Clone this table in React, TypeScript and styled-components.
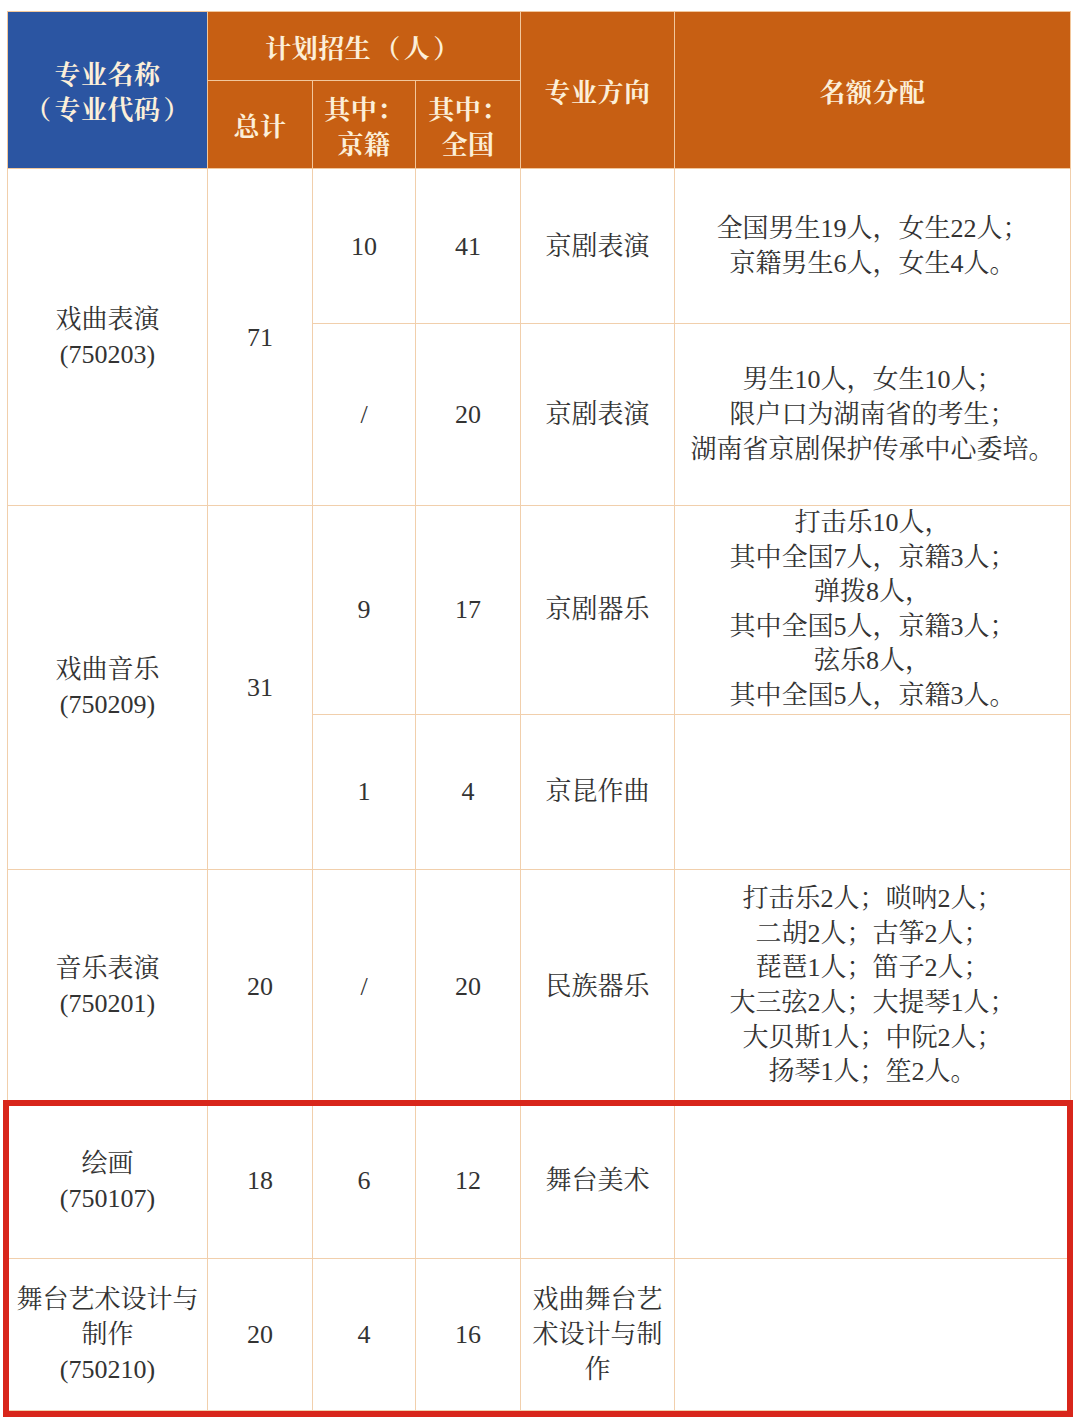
import React from "react";
import styled, { createGlobalStyle } from "styled-components";

const GlobalStyle = createGlobalStyle`
  html, body {
    margin: 0;
    padding: 0;
    background: #ffffff;
    overflow: hidden;
  }
  body {
    font-family: "Liberation Serif", "Noto Serif CJK SC", "Noto Sans CJK SC", serif;
  }
`;

const Page = styled.div`
  padding: 11px 0 13px 7px;
  min-height: 1423px;
  box-sizing: border-box;
`;

const Frame = styled.div`
  position: relative;
  width: 1063px;
`;

const Table = styled.table`
  border-collapse: collapse;
  table-layout: fixed;
  width: 1063px;
  font-family: "Liberation Serif", "Noto Serif CJK SC", "Noto Sans CJK SC", serif;
`;

const HeadRow = styled.tr<{ $h: number }>`
  height: ${(p) => p.$h}px;
`;

const HeadCell = styled.th<{ $blue?: boolean }>`
  background: ${(p) => (p.$blue ? "#2b55a2" : "#c75f13")};
  color: #fcefd9;
  font-size: 26px;
  font-weight: 700;
  line-height: 35px;
  text-align: center;
  vertical-align: middle;
  border: 1px solid #f2c79c;
  padding: 0 4px;
  letter-spacing: 0.5px;
  font-family: "Noto Serif CJK SC", "Noto Sans CJK SC", serif;
`;

const Paren = styled.span`
  display: inline-block;
  padding: 0 3px;
`;

const BodyRow = styled.tr<{ $h: number }>`
  height: ${(p) => p.$h}px;
`;

const Cell = styled.td<{ $tight?: boolean }>`
  border: 1px solid #f1cfac;
  color: #333333;
  font-size: 26px;
  line-height: ${(p) => (p.$tight ? "34.6px" : "35px")};
  text-align: center;
  vertical-align: middle;
  padding: 0 4px;
  background: #ffffff;
`;

const Highlight = styled.div`
  position: absolute;
  left: -4px;
  right: -3px;
  top: 1089px;
  height: 317px;
  border: 6px solid #d8261b;
  box-sizing: border-box;
  pointer-events: none;
  z-index: 2;
`;

const Lines: React.FC<{ lines: React.ReactNode[] }> = ({ lines }) => (
  <>
    {lines.map((l, i) => (
      <React.Fragment key={i}>
        {l}
        {i < lines.length - 1 && <br />}
      </React.Fragment>
    ))}
  </>
);

export default function App() {
  return (
    <Page>
      <GlobalStyle />
      <Frame>
        <Table>
          <colgroup>
            <col style={{ width: 200 }} />
            <col style={{ width: 105 }} />
            <col style={{ width: 103 }} />
            <col style={{ width: 105 }} />
            <col style={{ width: 154 }} />
            <col style={{ width: 396 }} />
          </colgroup>
          <thead>
            <HeadRow $h={69}>
              <HeadCell $blue rowSpan={2}>
                <Lines
                  lines={[
                    "专业名称",
                    <>
                      <Paren>（</Paren>专业代码<Paren>）</Paren>
                    </>,
                  ]}
                />
              </HeadCell>
              <HeadCell colSpan={3}>
                计划招生<Paren>（</Paren>人<Paren>）</Paren>
              </HeadCell>
              <HeadCell rowSpan={2}>专业方向</HeadCell>
              <HeadCell rowSpan={2}>名额分配</HeadCell>
            </HeadRow>
            <HeadRow $h={88}>
              <HeadCell>总计</HeadCell>
              <HeadCell>
                <Lines lines={["其中：", "京籍"]} />
              </HeadCell>
              <HeadCell>
                <Lines lines={["其中：", "全国"]} />
              </HeadCell>
            </HeadRow>
          </thead>
          <tbody>
            <BodyRow $h={155}>
              <Cell rowSpan={2}>
                <Lines lines={["戏曲表演", "(750203)"]} />
              </Cell>
              <Cell rowSpan={2}>71</Cell>
              <Cell>10</Cell>
              <Cell>41</Cell>
              <Cell>京剧表演</Cell>
              <Cell>
                <Lines lines={["全国男生19人，女生22人；", "京籍男生6人，女生4人。"]} />
              </Cell>
            </BodyRow>
            <BodyRow $h={182}>
              <Cell>/</Cell>
              <Cell>20</Cell>
              <Cell>京剧表演</Cell>
              <Cell>
                <Lines
                  lines={[
                    "男生10人，女生10人；",
                    "限户口为湖南省的考生；",
                    "湖南省京剧保护传承中心委培。",
                  ]}
                />
              </Cell>
            </BodyRow>
            <BodyRow $h={208}>
              <Cell rowSpan={2}>
                <Lines lines={["戏曲音乐", "(750209)"]} />
              </Cell>
              <Cell rowSpan={2}>31</Cell>
              <Cell>9</Cell>
              <Cell>17</Cell>
              <Cell>京剧器乐</Cell>
              <Cell $tight>
                <Lines
                  lines={[
                    "打击乐10人，",
                    "其中全国7人，京籍3人；",
                    "弹拨8人，",
                    "其中全国5人，京籍3人；",
                    "弦乐8人，",
                    "其中全国5人，京籍3人。",
                  ]}
                />
              </Cell>
            </BodyRow>
            <BodyRow $h={155}>
              <Cell>1</Cell>
              <Cell>4</Cell>
              <Cell>京昆作曲</Cell>
              <Cell />
            </BodyRow>
            <BodyRow $h={234}>
              <Cell>
                <Lines lines={["音乐表演", "(750201)"]} />
              </Cell>
              <Cell>20</Cell>
              <Cell>/</Cell>
              <Cell>20</Cell>
              <Cell>民族器乐</Cell>
              <Cell $tight>
                <Lines
                  lines={[
                    "打击乐2人；唢呐2人；",
                    "二胡2人；古筝2人；",
                    "琵琶1人；笛子2人；",
                    "大三弦2人；大提琴1人；",
                    "大贝斯1人；中阮2人；",
                    "扬琴1人；笙2人。",
                  ]}
                />
              </Cell>
            </BodyRow>
            <BodyRow $h={155}>
              <Cell>
                <Lines lines={["绘画", "(750107)"]} />
              </Cell>
              <Cell>18</Cell>
              <Cell>6</Cell>
              <Cell>12</Cell>
              <Cell>舞台美术</Cell>
              <Cell />
            </BodyRow>
            <BodyRow $h={152}>
              <Cell>
                <Lines lines={["舞台艺术设计与", "制作", "(750210)"]} />
              </Cell>
              <Cell>20</Cell>
              <Cell>4</Cell>
              <Cell>16</Cell>
              <Cell>戏曲舞台艺术设计与制作</Cell>
              <Cell />
            </BodyRow>
          </tbody>
        </Table>
        <Highlight />
      </Frame>
    </Page>
  );
}
